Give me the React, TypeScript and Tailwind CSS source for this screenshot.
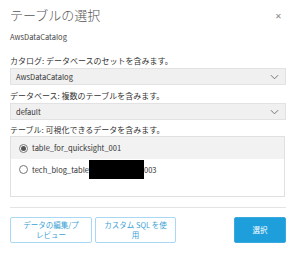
import React from 'react';

const Chevron = () => (
  <svg viewBox="0 0 10 6" className="w-[9px] h-[6px] text-[#666]" fill="none" stroke="currentColor" strokeWidth="1">
    <path d="M1 1l4 4 4-4" />
  </svg>
);

const Select: React.FC<{ value: string }> = ({ value }) => (
  <div className="h-[17px] flex items-center justify-between bg-[#f0f0f0] border border-[#e2e2e2] pl-[5px] pr-[6px]">
    <span className="text-[7.5px] text-[#333]">{value}</span>
    <Chevron />
  </div>
);

const Radio: React.FC<{ checked?: boolean }> = ({ checked }) => (
  <span className="w-[9px] h-[9px] rounded-full border border-[#777] bg-white flex items-center justify-center shrink-0">
    {checked && <span className="w-[5px] h-[5px] rounded-full bg-[#555]" />}
  </span>
);

export default function App() {
  return (
    <div
      className="w-[300px] h-[254px] bg-white px-[10px] pt-[7px] relative"
      style={{ fontFamily: '"Noto Sans CJK JP", "Noto Sans", sans-serif' }}
    >
      {/* close */}
      <div className="absolute right-[18px] top-[12px] text-[8px] leading-none text-[#888]">✕</div>

      <div className="text-[13px] leading-[16px] text-[#555] font-light">テーブルの選択</div>
      <div className="mt-[9px] text-[7.5px] leading-[10px] text-[#444]">AwsDataCatalog</div>

      <div className="mt-[14px] text-[8px] leading-[10px] text-[#333]">カタログ: データベースのセットを含みます。</div>
      <div className="mt-[2px] mr-[4px]">
        <Select value="AwsDataCatalog" />
      </div>

      <div className="mt-[6px] text-[8px] leading-[10px] text-[#333]">データベース: 複数のテーブルを含みます。</div>
      <div className="mt-[2px] mr-[4px]">
        <Select value="default" />
      </div>

      <div className="mt-[5px] text-[8px] leading-[10px] text-[#333]">テーブル: 可視化できるデータを含みます。</div>
      <div className="mt-[1px] mr-[5px] h-[61px] border border-[#e0e0e0] flex flex-col">
        <div className="h-[22px] bg-[#f2f2f2] flex items-center gap-[4px] pl-[8px]">
          <Radio checked />
          <span className="text-[7.5px] text-[#333]">table_for_quicksight_001</span>
        </div>
        <div className="h-[21px] flex items-center gap-[4px] pl-[8px]">
          <Radio />
          <span className="text-[7.5px] text-[#333] flex items-center">
            tech_blog_table
            <span className="inline-block w-[55px] h-[19px] bg-black" />
            003
          </span>
        </div>
      </div>

      <div className="mt-[10px] mr-[4px] h-px bg-[#e4e4e4]" />

      <div className="mt-[9px] mr-[4px] flex items-start">
        <button className="w-[82px] h-[26px] border border-[#a9d9f2] rounded-[2px] text-[7.5px] leading-[10px] text-[#3b9fd6] px-[11px]">
          データの編集/プレビュー
        </button>
        <button className="ml-[3px] w-[81px] h-[26px] border border-[#a9d9f2] rounded-[2px] text-[7.5px] leading-[10px] text-[#3b9fd6] px-[8px]">
          カスタム SQL を使用
        </button>
        <button className="ml-auto w-[52px] h-[26px] bg-[#1e9fdb] border border-[#3aa9de] rounded-[2px] text-[7.5px] text-white">
          選択
        </button>
      </div>
    </div>
  );
}
